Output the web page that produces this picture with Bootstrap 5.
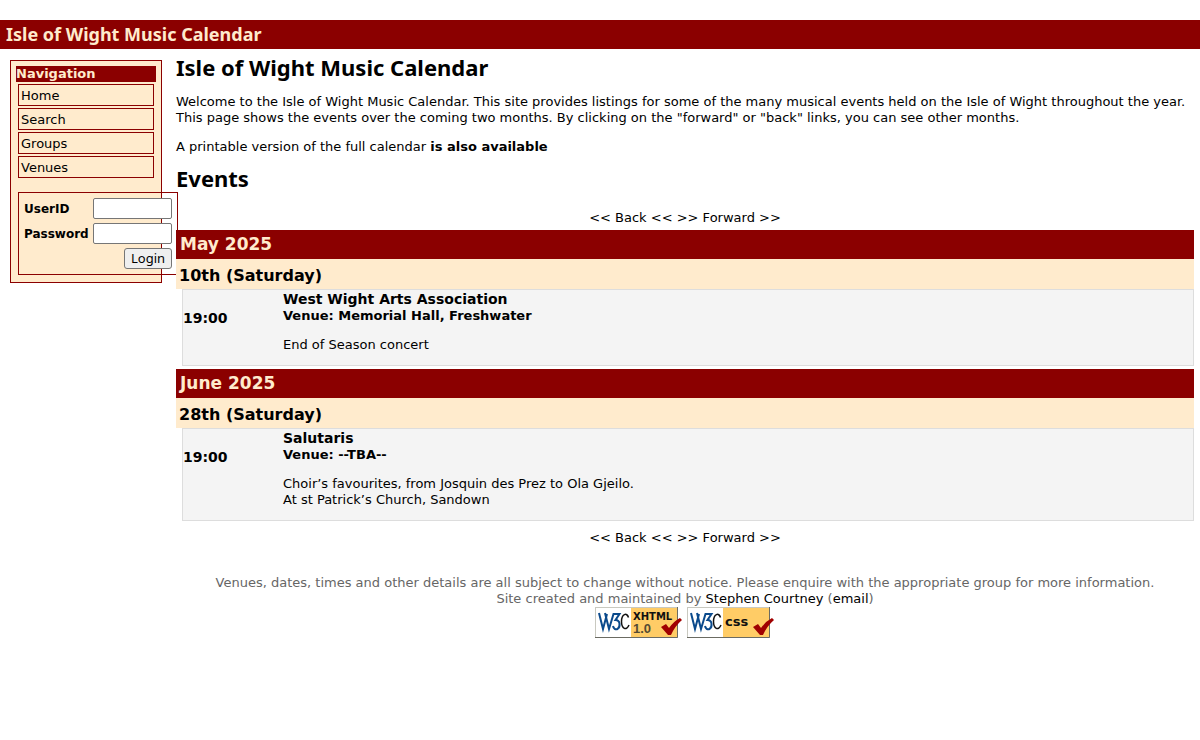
<!DOCTYPE html>
<html lang="en">
<head>
<meta charset="utf-8">
<meta name="viewport" content="width=device-width, initial-scale=1">
<title>Isle of Wight Music Calendar</title>
<link href="https://cdn.jsdelivr.net/npm/bootstrap@5.3.0/dist/css/bootstrap.min.css" rel="stylesheet">
<style>
  :root { --wine: #8b0000; --cream: #ffebcd; }
  body { font: 13px/16px "DejaVu Sans", Verdana, sans-serif; color: #000; background: #fff; }
  a { color: #000; text-decoration: none; }
  a:hover { text-decoration: underline; }
  .site-bar { margin-top: 20px; padding: 0 6px; background: var(--wine); color: var(--cream); font: bold 18px/29px "Noto Sans", sans-serif; }
  .page-title { font: bold 22px/22px "Noto Sans", sans-serif; margin: 0 0 16px; }
  .events-title { margin: 12px 0 21px; }
  .sidebar { width: 152px; margin: 11px 14px 0 10px; padding: 5px 5px 7px; border: 1px solid var(--wine); background: var(--cream); }
  .side-title { background: var(--wine); color: var(--cream); font: bold 13px/16px "DejaVu Sans", sans-serif; margin: 0 0 2px; }
  .side-links { margin: 0 2px 14px; gap: 2px; }
  .side-links a { display: block; border: 1px solid var(--wine); padding: 3px 2px 1px; }
  .login-form { display: grid; grid-template-columns: 65px 79px; gap: 4px; width: 160px; margin-left: 2px; padding: 5px; border: 1px solid var(--wine); align-items: center; }
  .login-form label { font-weight: bold; font-size: 12px; }
  .login-form input { width: 100%; height: 21px; padding: 1px 2px; border: 1px solid #767676; border-radius: 2px; font-size: 13px; background: #fff; }
  .login-form button { grid-column: 2; justify-self: end; width: 48px; height: 21px; padding: 0; border: 1px solid #767676; border-radius: 3px; background: #efefef; color: #000; font: 13px/19px "Noto Sans", sans-serif; }
  .main-col { padding: 7px 6px 0 0; min-width: 0; z-index: 1; }
  .main-col p { margin: 0 0 13px; }
  .month-bar { background: var(--wine); color: var(--cream); font: bold 17px/29px "DejaVu Sans", sans-serif; padding: 0 4px; margin: 0; }
  .day-bar { background: var(--cream); font: bold 16px/26px "DejaVu Sans", sans-serif; padding: 4px 3px 0; margin: 0; }
  .event-row { margin: 0 0 3px 6px; border: 1px solid #ddd; background: #f4f4f4; }
  .event-time { width: 100px; padding-top: 20px; font-weight: bold; font-size: 14px; }
  .event-name { font: bold 14px/18px "DejaVu Sans", sans-serif; margin: 0; }
  .event-row p { margin: 13px 0 12px; }
  .pager-end { padding-top: 6px; }
  .site-foot { margin-top: 29px; color: #666; }
  .w3c-badge { display: block; width: 88px; height: 31px; overflow: visible; }
</style>
</head>
<body>
<header class="site-bar">Isle of Wight Music Calendar</header>
<div class="d-flex align-items-start">
  <aside class="sidebar flex-shrink-0">
    <h2 class="side-title">Navigation</h2>
    <nav class="side-links d-flex flex-column">
      <a href="#">Home</a>
      <a href="#">Search</a>
      <a href="#">Groups</a>
      <a href="#">Venues</a>
    </nav>
    <form class="login-form">
      <label for="userid">UserID</label><input type="text" id="userid">
      <label for="password">Password</label><input type="password" id="password">
      <button type="button">Login</button>
    </form>
  </aside>
  <main class="main-col flex-grow-1 position-relative">
    <h1 class="page-title">Isle of Wight Music Calendar</h1>
    <p>Welcome to the Isle of Wight Music Calendar. This site provides listings for some of the many musical events held on the Isle of Wight throughout the year.
      This page shows the events over the coming two months. By clicking on the "forward" or "back" links, you can see other months.</p>
    <p class="mb-0">A printable version of the full calendar <a href="#" class="fw-bold">is also available</a></p>
    <h2 class="page-title events-title">Events</h2>
    <nav class="text-center mb-1"><a href="#">&lt;&lt; Back &lt;&lt;</a> <a href="#">&gt;&gt; Forward &gt;&gt;</a></nav>

    <h3 class="month-bar">May 2025</h3>
    <h4 class="day-bar">10th (Saturday)</h4>
    <article class="event-row d-flex">
      <div class="event-time flex-shrink-0">19:00</div>
      <div>
        <h5 class="event-name">West Wight Arts Association</h5>
        <div class="fw-bold">Venue: Memorial Hall, Freshwater</div>
        <p>End of Season concert</p>
      </div>
    </article>

    <h3 class="month-bar">June 2025</h3>
    <h4 class="day-bar">28th (Saturday)</h4>
    <article class="event-row d-flex">
      <div class="event-time flex-shrink-0">19:00</div>
      <div>
        <h5 class="event-name">Salutaris</h5>
        <div class="fw-bold">Venue: --TBA--</div>
        <p>Choir’s favourites, from Josquin des Prez to Ola Gjeilo.<br>At st Patrick’s Church, Sandown</p>
      </div>
    </article>

    <nav class="text-center pager-end"><a href="#">&lt;&lt; Back &lt;&lt;</a> <a href="#">&gt;&gt; Forward &gt;&gt;</a></nav>

    <footer class="site-foot text-center">
      <div>Venues, dates, times and other details are all subject to change without notice. Please enquire with the appropriate group for more information.</div>
      <div>Site created and maintained by <a href="#">Stephen Courtney</a> (<a href="#">email</a>)</div>
      <div class="d-flex justify-content-center gap-1">
        <a href="#" aria-label="Valid XHTML 1.0">
          <svg class="w3c-badge" viewBox="0 0 88 31">
            <rect width="83" height="31" fill="#c9c9c0"/><rect x="1" y="1" width="81" height="29" fill="#fff"/>
            <rect x="36" y="1" width="46" height="29" fill="#fc6"/><path d="M82.500 0V30.500H0" fill="none" stroke="#6b6b62"/>
            <g fill="none" stroke="#0b4a8c" stroke-width="2"><path d="M4 6L8 22L12 7"/><path d="M10 6L14 22L18.500 7H24.500L20.500 13C25.500 13 25.500 20 22.500 22C20.500 23 18.500 21.500 18 19"/></g>
            <path d="M33.500 10.500C32 5 26.500 7 26.500 14.500C26.500 22 31.500 24 34 18" fill="none" stroke="#111" stroke-width="1.500"/>
            <text x="38" y="13" font-family="DejaVu Sans" font-weight="bold" font-size="10" fill="#111">XHTML</text>
            <text x="38" y="26" font-family="Liberation Sans" font-weight="bold" font-size="13" fill="#554b33">1.0</text>
            <path d="M66 20L71 17L74 21Q79 14 85 11L87 13Q80 19 76 28H73Z" fill="#a00000"/>
          </svg>
        </a>
        <a href="#" aria-label="Valid CSS">
          <svg class="w3c-badge" viewBox="0 0 88 31">
            <rect width="83" height="31" fill="#c9c9c0"/><rect x="1" y="1" width="81" height="29" fill="#fff"/>
            <rect x="36" y="1" width="46" height="29" fill="#fc6"/><path d="M82.500 0V30.500H0" fill="none" stroke="#6b6b62"/>
            <g fill="none" stroke="#0b4a8c" stroke-width="2"><path d="M4 6L8 22L12 7"/><path d="M10 6L14 22L18.500 7H24.500L20.500 13C25.500 13 25.500 20 22.500 22C20.500 23 18.500 21.500 18 19"/></g>
            <path d="M33.500 10.500C32 5 26.500 7 26.500 14.500C26.500 22 31.500 24 34 18" fill="none" stroke="#111" stroke-width="1.500"/>
            <text x="38" y="19" font-family="DejaVu Sans" font-weight="bold" font-size="13" fill="#111">css</text>
            <path d="M66 20L71 17L74 21Q79 14 85 11L87 13Q80 19 76 28H73Z" fill="#a00000"/>
          </svg>
        </a>
      </div>
    </footer>
  </main>
</div>
<script src="https://cdn.jsdelivr.net/npm/bootstrap@5.3.0/dist/js/bootstrap.bundle.min.js"></script>
</body>
</html>
